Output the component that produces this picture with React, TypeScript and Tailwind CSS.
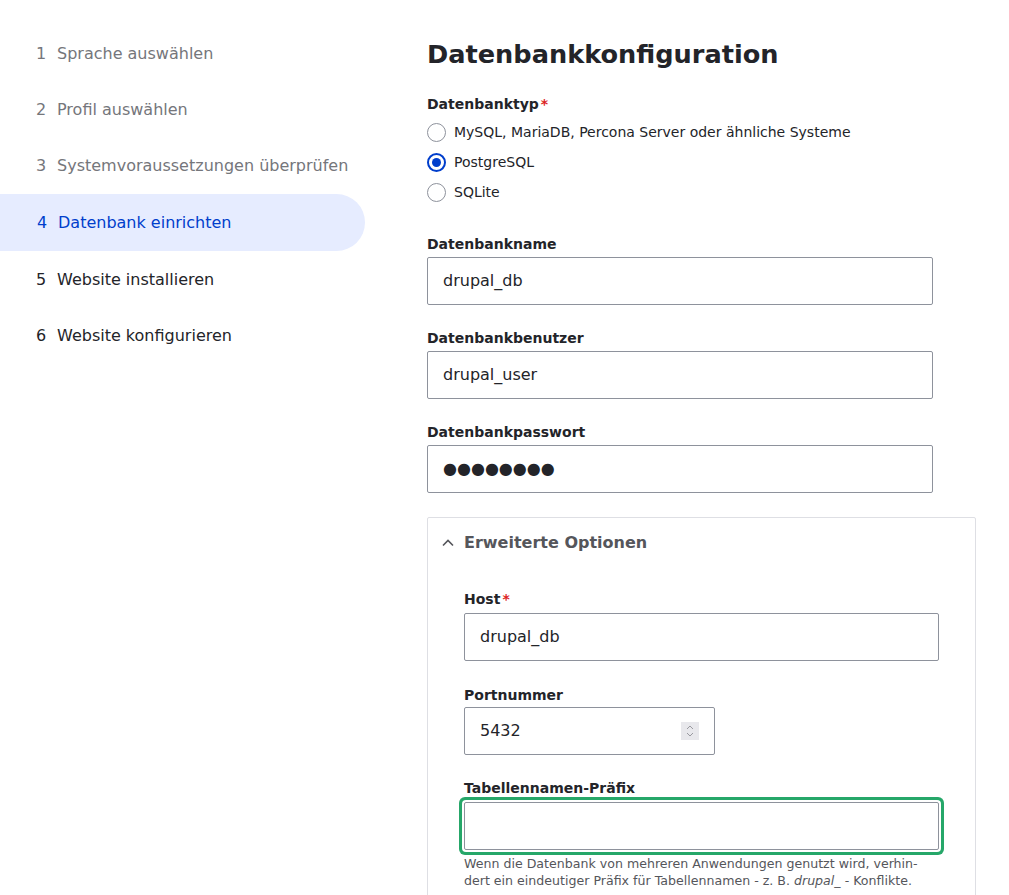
import React from "react";

const navItems = [
  { n: "1", label: "Sprache auswählen", state: "done" },
  { n: "2", label: "Profil auswählen", state: "done" },
  { n: "3", label: "Systemvoraussetzungen überprüfen", state: "done" },
  { n: "4", label: "Datenbank einrichten", state: "active" },
  { n: "5", label: "Website installieren", state: "todo" },
  { n: "6", label: "Website konfigurieren", state: "todo" },
];

function Label({ children, required, className = "mb-[4px]" }: { children: React.ReactNode; required?: boolean; className?: string }) {
  return (
    <div className={`text-[14px] font-bold leading-[18px] text-[#232429] ${className}`}>
      {children}
      {required && <span className="text-[#dc2323] ml-[2px]">*</span>}
    </div>
  );
}

function TextInput({ value, className = "" }: { value: string; className?: string }) {
  return (
    <div
      className={`h-[48px] border border-[#8e929c] rounded-[2px] bg-white flex items-center px-[15px] text-[16px] text-[#232429] ${className}`}
    >
      {value}
    </div>
  );
}

function Radio({ checked, label }: { checked?: boolean; label: string }) {
  return (
    <div className="flex items-center h-[30px]">
      {checked ? (
        <span className="w-[19px] h-[19px] rounded-full border-[2px] border-[#003ecc] flex items-center justify-center bg-white">
          <span className="w-[9px] h-[9px] rounded-full bg-[#003ecc]" />
        </span>
      ) : (
        <span className="w-[19px] h-[19px] rounded-full border border-[#8e929c] bg-white" />
      )}
      <span className="ml-[8px] text-[14px] text-[#232429]">{label}</span>
    </div>
  );
}

export default function App() {
  return (
    <div
      className="w-[1009px] h-[895px] overflow-hidden bg-white flex"
      style={{ fontFamily: '"DejaVu Sans", sans-serif' }}
    >
      <nav className="w-[365px] shrink-0 pt-[26px]">
        {navItems.map((it) => {
          const active = it.state === "active";
          const color =
            it.state === "done" ? "text-[#75767b]" : active ? "text-[#003ecc]" : "text-[#232429]";
          if (active) {
            return (
              <div
                key={it.n}
                className={`h-[57px] flex items-center pl-[36px] text-[16px] bg-[#e6ecff] rounded-r-[29px] ${color}`}
              >
                <span className="w-[22px] pl-[1px]">{it.n}</span>
                <span>{it.label}</span>
              </div>
            );
          }
          return (
            <div
              key={it.n}
              className={`h-[56px] flex items-center pl-[36px] text-[16px] ${color} ${
                it.state === "todo" ? "pt-[2px]" : ""
              }`}
            >
              <span className="w-[21px]">{it.n}</span>
              <span>{it.label}</span>
            </div>
          );
        })}
      </nav>

      <main className="flex-1 pl-[62px] pt-[36px]">
        <h1 className="text-[25.6px] font-bold leading-[36px] text-[#232429] mb-[23px]">
          Datenbankkonfiguration
        </h1>

        <Label required>Datenbanktyp</Label>
        <div className="mt-[1px]">
          <Radio label="MySQL, MariaDB, Percona Server oder ähnliche Systeme" />
          <div className="mt-[0.5px]">
            <Radio checked label="PostgreSQL" />
          </div>
          <Radio label="SQLite" />
        </div>

        <div className="mt-[27.5px]">
          <Label>Datenbankname</Label>
          <TextInput value="drupal_db" className="w-[506px]" />
        </div>

        <div className="mt-[24px]">
          <Label>Datenbankbenutzer</Label>
          <TextInput value="drupal_user" className="w-[506px]" />
        </div>

        <div className="mt-[24px]">
          <Label>Datenbankpasswort</Label>
          <TextInput value="●●●●●●●●" className="w-[506px]" />
        </div>

        <div className="mt-[24px] w-[549px] border border-[#dedfe4] rounded-t-[2px] pb-[40px]">
          <div className="h-[49px] flex items-center pl-[13px] text-[16px] font-bold text-[#55565b]">
            <svg width="14" height="14" viewBox="0 0 14 14" className="mr-[9px]">
              <path d="M2 9.5 L7 4.5 L12 9.5" fill="none" stroke="#55565b" strokeWidth="1.6" />
            </svg>
            Erweiterte Optionen
          </div>
          <div className="px-[36px] pt-[23px]">
            <Label required className="mb-[5px]">Host</Label>
            <TextInput value="drupal_db" className="w-[475px]" />

            <div className="mt-[25px]">
              <Label className="mb-[3px]">Portnummer</Label>
              <div className="w-[251px] h-[48px] border border-[#8e929c] rounded-[2px] flex items-center px-[15px] text-[16px] text-[#232429]">
                <span className="flex-1">5432</span>
                <span className="w-[18px] h-[18px] bg-[#e8e8ec] flex items-center justify-center">
                  <svg width="10" height="14" viewBox="0 0 10 14">
                    <path d="M2 5 L5 2 L8 5" fill="none" stroke="#9a9aa0" strokeWidth="1" />
                    <path d="M2 9 L5 12 L8 9" fill="none" stroke="#9a9aa0" strokeWidth="1" />
                  </svg>
                </span>
              </div>
            </div>

            <div className="mt-[24px]">
              <Label className="mb-[5px]">Tabellennamen-Präfix</Label>
              <div className="w-[475px] h-[48px] border border-[#8e929c] bg-white rounded-[2px] shadow-[0_0_0_2px_#ffffff,0_0_0_5px_#26a769]" />
              <p className="mt-[5px] text-[12.6px] leading-[17px] text-[#55565b] w-[476px]">
                Wenn die Datenbank von mehreren Anwendungen genutzt wird, verhin-
                <br />
                dert ein eindeutiger Präfix für Tabellennamen - z. B. <em>drupal_</em> - Konflikte.
              </p>
            </div>
          </div>
        </div>
      </main>
    </div>
  );
}
